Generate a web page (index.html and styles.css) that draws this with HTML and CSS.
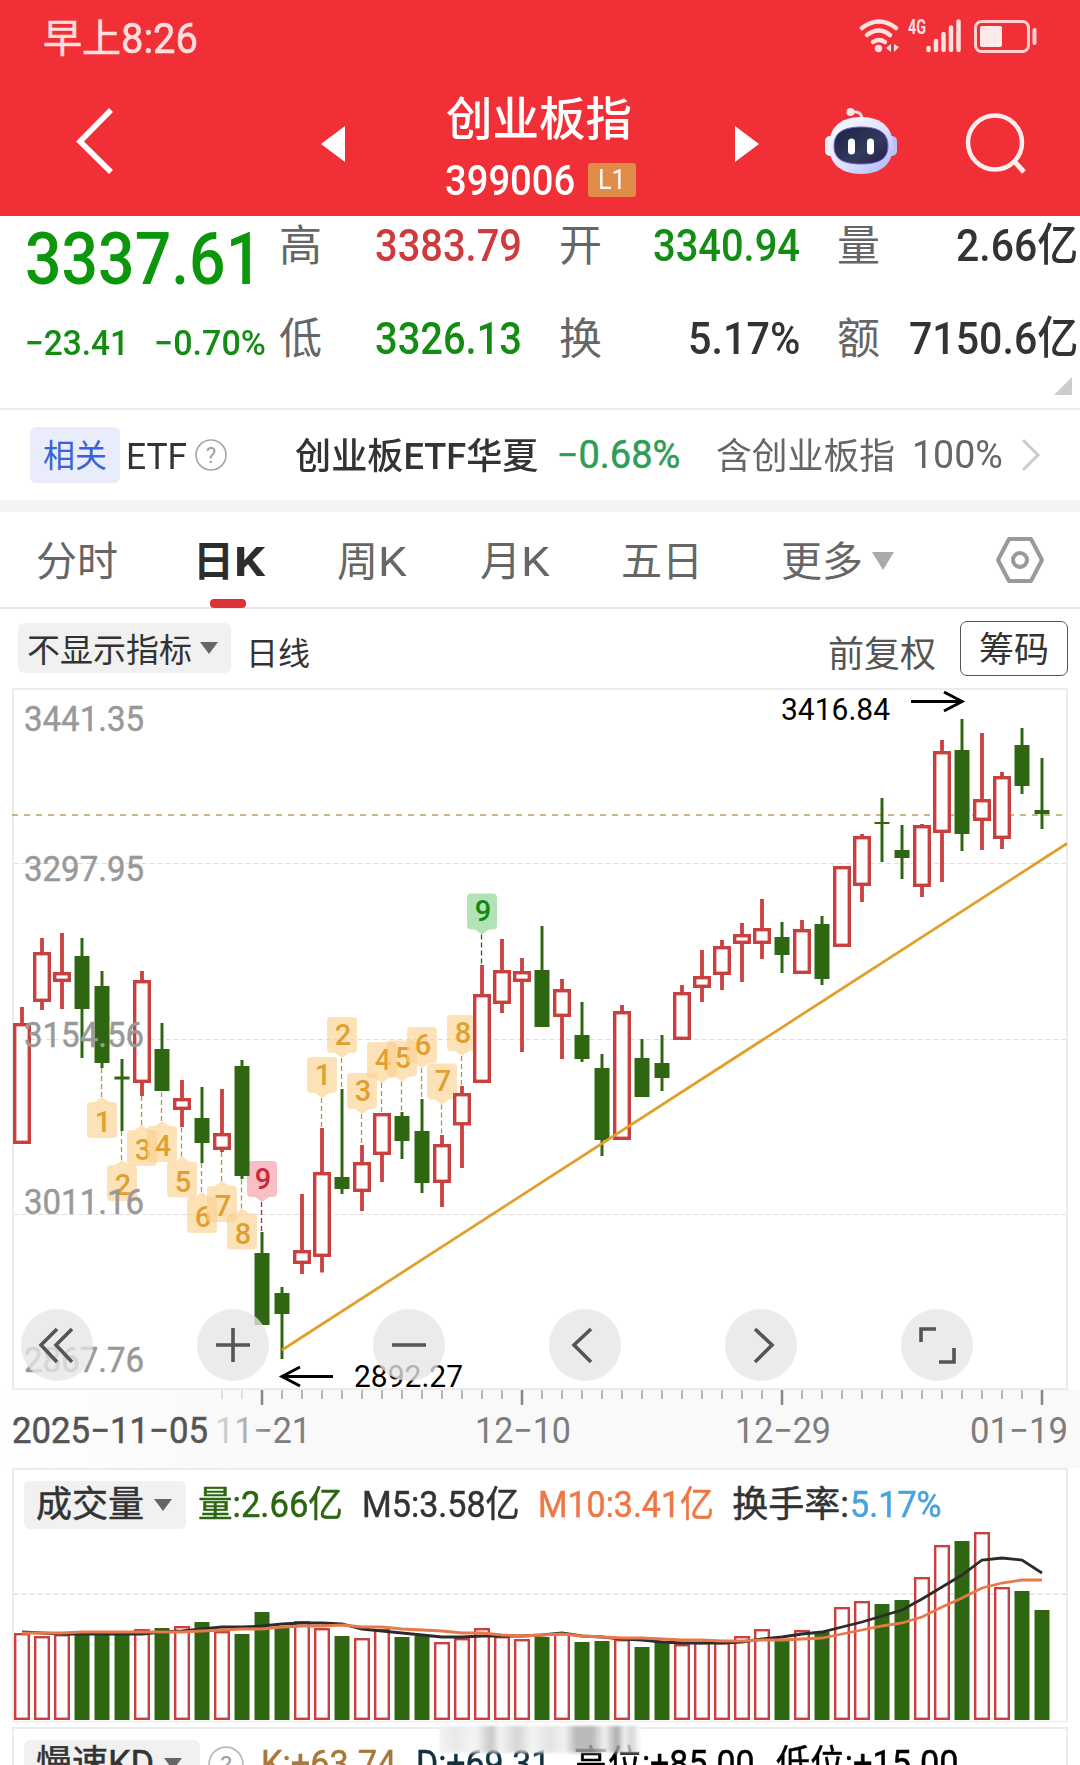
FILE: index.html
```html
<!DOCTYPE html>
<html lang="zh-CN">
<head>
    <link rel="icon" href="data:,">
    <meta charset="UTF-8">
    <meta name="viewport" content="width=device-width, initial-scale=1.0">
    <title>创业板指 399006</title>
    <link rel="stylesheet" href="styles.css">
</head>
<body>

    <!-- Red top area: status bar and title bar -->
    <header class="top">
        <div class="status">
            <div class="clock"><span data-w="78">早上</span><span class="clock-num" data-w="77">8:26</span></div>
            <svg class="status-icons" width="182" height="38" viewBox="858 17 182 38">
                <g fill="none" stroke="#ffe0e0" stroke-width="4.5" stroke-linecap="round">
                    <path d="M862 28 Q879 15 896 28"/>
                    <path d="M867 35 Q879 26 890 35"/>
                    <path d="M873 42 Q879 38 885 42"/>
                </g>
                <circle cx="878.500" cy="48.500" r="3.700" fill="#ffe0e0"/>
                <path d="M891 44v8l-5-4zM894 44v8l5-5z" fill="#ffe0e0"/>
                <text x="908" y="33.500" class="net" textLength="18" lengthAdjust="spacingAndGlyphs">4G</text>
                <g stroke="#ffe0e0" stroke-width="4.500" stroke-linecap="round">
                    <path d="M928.500 48v2M936 41v9M943.500 34v16M951 27.500v22.500M958.500 21.500v28.500"/>
                </g>
                <rect x="975.500" y="21.500" width="53" height="30" rx="6" fill="none" stroke="#ffd0d0" stroke-width="3"/>
                <rect x="980" y="26" width="22" height="21" rx="2" fill="#ffe9e9"/>
                <rect x="1032.500" y="28" width="4" height="17" rx="2" fill="#ffd0d0"/>
            </svg>
        </div>
        <div class="titlebar">
            <svg class="back" width="40" height="70" viewBox="0 0 40 70"><path d="M36 4 5 35.500 36 66" fill="none" stroke="#fff" stroke-width="5.500"/></svg>
            <svg class="prev" width="24" height="38" viewBox="0 0 24 38"><path d="M0 19 24 1v36z" fill="#fff"/></svg>
            <div class="name">
                <h1><span data-w="186">创业板指</span></h1>
                <div class="code"><span data-w="130">399006</span><i><span data-w="28">L1</span></i></div>
            </div>
            <svg class="next" width="24" height="38" viewBox="0 0 24 38"><path d="M24 19 0 1v36z" fill="#fff"/></svg>
            <svg class="robot" width="74" height="70" viewBox="824 106 74 70">
                <defs>
                    <linearGradient id="shell" x1="0" y1="0" x2="1" y2="1">
                        <stop offset="0" stop-color="#fff"/><stop offset=".55" stop-color="#dfe0fb"/><stop offset="1" stop-color="#a9b2ff"/>
                    </linearGradient>
                    <linearGradient id="visor" x1="0" y1="0" x2="1" y2="1">
                        <stop offset="0" stop-color="#19233f"/><stop offset=".6" stop-color="#323a5e"/><stop offset="1" stop-color="#222045"/>
                    </linearGradient>
                </defs>
                <path d="M851 112q11-2 11 8" fill="none" stroke="#ffd9e0" stroke-width="3"/>
                <circle cx="850.500" cy="112" r="4" fill="#ffe3e6"/>
                <rect x="825" y="136" width="10" height="20" rx="5" fill="#e8ecff"/>
                <rect x="887" y="136" width="10" height="20" rx="5" fill="#b9c2ff"/>
                <path d="M861 117c22 0 32 12 32 29s-11 28-32 28-32-11-32-28 10-29 32-29z" fill="url(#shell)"/>
                <path d="M861 127c18 0 27 6 27 19s-9 18-27 18-27-5-27-18 9-19 27-19z" fill="url(#visor)" stroke="#7a5ee0" stroke-width="1"/>
                <path d="M851.500 142v9M870.500 142v9" stroke="#fff" stroke-width="7" stroke-linecap="round"/>
            </svg>
            <svg class="search" width="64" height="64" viewBox="963 111 64 64">
                <circle cx="995" cy="142.500" r="27" fill="none" stroke="#ffeded" stroke-width="4.500"/>
                <path d="M1014 161l10 11" stroke="#ffeded" stroke-width="5"/>
            </svg>
        </div>
    </header>

    <!-- Quote summary -->
    <section class="quote">
        <div class="price-col">
            <div class="price"><span data-w="237">3337.61</span></div>
            <div class="change"><span data-w="104">−23.41</span><span data-w="112">−0.70%</span></div>
        </div>
        <div class="cells">
            <div class="cell"><label>高</label><b class="red" data-w="147">3383.79</b></div>
            <div class="cell"><label>开</label><b class="green" data-w="147">3340.94</b></div>
            <div class="cell"><label>量</label><b data-w="122">2.66亿</b></div>
            <div class="cell"><label>低</label><b class="green" data-w="147">3326.13</b></div>
            <div class="cell"><label>换</label><b data-w="112">5.17%</b></div>
            <div class="cell"><label>额</label><b data-w="169">7150.6亿</b></div>
        </div>
        <i class="corner"></i>
    </section>

    <!-- Related ETF -->
    <section class="etf">
        <span class="tag">相关</span>
        <span class="etf-word" data-w="61">ETF</span>
        <svg class="help" width="32" height="32" viewBox="0 0 32 32"><circle cx="16" cy="16" r="15" fill="none" stroke="#a5a5a5" stroke-width="1.600"/><text x="16" y="24" text-anchor="middle">?</text></svg>
        <span class="etf-name" data-w="243">创业板ETF华夏</span>
        <span class="etf-pct" data-w="124">−0.68%</span>
        <span class="etf-hold" data-w="179">含创业板指</span>
        <span class="etf-rate" data-w="91">100%</span>
        <svg class="more" width="20" height="34" viewBox="0 0 20 34"><path d="M2 2 17 17 2 32" fill="none" stroke="#ccc" stroke-width="3"/></svg>
    </section>

    <!-- Period tabs -->
    <nav class="tabs">
        <span>分时</span>
        <span class="active">日<em data-w="31">K</em></span>
        <span>周<em data-w="29">K</em></span>
        <span>月<em data-w="29">K</em></span>
        <span>五日</span>
        <span class="dropdown">更多<i></i></span>
        <svg width="50" height="48" viewBox="0 0 50 48"><path d="M14 3h22l11 21-11 21H14L3 24z" fill="none" stroke="#999" stroke-width="4" stroke-linejoin="round"/><circle cx="25" cy="24" r="7" fill="none" stroke="#999" stroke-width="4"/></svg>
    </nav>

    <div class="options">
        <span class="chip">不显示指标<i></i></span>
        <span class="line-type">日线</span>
        <span class="adjust">前复权</span>
        <span class="chips-btn">筹码</span>
    </div>

    <!-- Candlestick chart -->
    <div class="kline">
        <svg id="kline" width="1080" height="702" viewBox="0 688 1080 702"></svg>
        <div class="tools">
            <button><svg viewBox="0 0 72 72"><path d="M36 20 20 36l16 17M51 20 35 36l16 17"/></svg></button>
            <button><svg viewBox="0 0 72 72"><path d="M19 36h34M36 19v34"/></svg></button>
            <button><svg viewBox="0 0 72 72"><path d="M19 36h34"/></svg></button>
            <button><svg viewBox="0 0 72 72"><path d="M42 20 25 36l17 17"/></svg></button>
            <button><svg viewBox="0 0 72 72"><path d="M30 20 47 36 30 53"/></svg></button>
            <button><svg viewBox="0 0 72 72"><path d="M20 33V20h15M53 39v14H38"/></svg></button>
        </div>
    </div>
    <svg id="axis" class="axis" width="1080" height="78" viewBox="0 1390 1080 78"></svg>

    <!-- Volume -->
    <section class="panel volume">
        <div class="legend">
            <span class="chip">成交量<i></i></span>
            <span class="l1" data-w="145">量:2.66亿</span>
            <span class="l2" data-w="158">M5:3.58亿</span>
            <span class="l3" data-w="176">M10:3.41亿</span>
            <span class="l4" data-w="117">换手率:</span><span class="l5" data-w="92">5.17%</span>
        </div>
        <svg id="volume" width="1052" height="190" viewBox="14 1530 1052 190"></svg>
    </section>

    <!-- KD, cut off by the bottom edge -->
    <section class="panel kd">
        <div class="legend">
            <span class="chip">慢速KD<i></i></span>
            <svg class="help" width="36" height="36" viewBox="0 0 32 32"><circle cx="16" cy="16" r="15" fill="none" stroke="#bbb" stroke-width="1.600"/><text x="16" y="24" text-anchor="middle">?</text></svg>
            <span class="k1" data-w="135">K:+63.74</span>
            <span class="k2" data-w="134">D:+69.31</span>
            <span class="k3" data-w="181">高位:+85.00</span>
            <span class="k4" data-w="183">低位:+15.00</span>
        </div>
        <div class="smudge"></div>
    </section>

    <script src="chart.js"></script>
</body>
</html>
```
FILE: styles.css
```css
/* General page styling */
* {
    box-sizing: border-box;
}

body {
    margin: 0;
    width: 1080px;
    height: 1765px;
    overflow: hidden;
    background: #fff;
    color: #333;
    font-family: Roboto, "Noto Sans CJK SC", sans-serif;
}

svg {
    display: block;
    flex: none;
}

i,
em {
    font-style: normal;
}

[data-w] {
    display: inline-block;
    white-space: nowrap;
    transform-origin: 0 50%;
}

.red { color: #cf3a3d; }
.green { color: #138c13; }

/* Top area */
.top {
    height: 216px;
    background: #f12f37;
    color: #fff;
}

.status {
    display: flex;
    justify-content: space-between;
    align-items: center;
    height: 76px;
    padding: 0 40px 4px 43px;
    color: #ffdede;
    font-size: 39px;
    -webkit-text-stroke: 0.6px #ffdede;
}

.status svg {
    -webkit-text-stroke: 0;
}

.clock {
    display: flex;
    align-items: center;
    line-height: 50px;
    padding-top: 6px;
}

.clock-num {
    font-size: 42px;
}

.net {
    font-size: 20px;
    font-weight: 700;
    fill: #ffe0e0;
}

.titlebar {
    display: flex;
    align-items: flex-start;
    height: 140px;
    padding-left: 75px;
}

.back { margin-top: 30px; }
.prev { margin: 49px 0 0 206px; }
.next { margin: 49px 0 0 98px; }
.robot { margin: 30px 0 0 65px; }
.search { margin: 35px 0 0 65px; }

.name {
    width: 192px;
    margin-left: 100px;
}

.name h1 {
    margin: 15px 0 0 1px;
    font-size: 46px;
    line-height: 56px;
    font-weight: 500;
}

.code {
    display: flex;
    align-items: center;
    height: 42px;
    margin-top: 12px;
    font-size: 42px;
    font-weight: 500;
}

.code i {
    width: 48px;
    height: 34px;
    margin-left: 13px;
    padding-left: 10px;
    border-radius: 3px;
    background: #e08c48;
    font-size: 28px;
    line-height: 34px;
    font-weight: 400;
}

/* Quote summary */
.quote {
    position: relative;
    display: flex;
    height: 194px;
    padding-left: 25px;
    border-bottom: 2px solid #ededed;
}

.price-col {
    width: 254px;
    flex: none;
}

.price {
    height: 84px;
    font-size: 73px;
    line-height: 84px;
    font-weight: 500;
    color: #0c960c;
    padding-top: 1px;
}

.change {
    display: flex;
    gap: 25px;
    margin-top: 24px;
    font-size: 35px;
    line-height: 40px;
    font-weight: 500;
    color: #138c13;
}

.cells {
    display: grid;
    grid-template-columns: 243px 241px 241px;
    grid-auto-rows: 60px;
    row-gap: 33px;
    column-gap: 37px;
}

.cell {
    display: flex;
    justify-content: space-between;
    align-items: center;
}

.cell label {
    font-size: 43px;
    line-height: 60px;
    color: #666;
}

.cell b {
    font-size: 45px;
    line-height: 60px;
    font-weight: 500;
}

.corner {
    position: absolute;
    right: 8px;
    bottom: 13px;
    border-left: 18px solid transparent;
    border-bottom: 18px solid #ccc;
}

/* Related ETF */
.etf {
    display: flex;
    align-items: center;
    height: 102px;
    padding-left: 30px;
    font-size: 36px;
    line-height: 50px;
    border-bottom: 12px solid #f4f4f4;
}

.tag {
    width: 90px;
    height: 56px;
    border-radius: 6px;
    background: #e9edfb;
    color: #3b63d6;
    font-size: 32px;
    line-height: 58px;
    text-align: center;
}

.etf-word { margin: 4px 0 0 6px; }
.help { margin-left: 8px; }
.help text { font-size: 22px; fill: #a0a0a0; }
.etf-name { margin: 4px 0 0 68px; font-weight: 500; }
.etf-pct { margin-left: 18px; font-size: 38px; color: #2f9c5a; -webkit-text-stroke: 0.5px #2f9c5a; }
.etf-hold { margin: 4px 0 0 36px; color: #666; }
.etf-rate { margin-left: 17px; font-size: 38px; color: #666; }
.more { margin-left: 18px; }

/* Period tabs */
.tabs {
    display: flex;
    align-items: center;
    height: 97px;
    padding-left: 36px;
    border-bottom: 2px solid #e8e8e8;
    font-size: 41px;
    color: #666;
}

.tabs span {
    position: relative;
    top: 2px;
    width: 143px;
    line-height: 60px;
    white-space: nowrap;
}

.tabs .active {
    width: 143px;
    padding-left: 14px;
    color: #2d2d2d;
    font-weight: 700;
}

.tabs .active::after {
    content: "";
    position: absolute;
    left: 31px;
    bottom: -16px;
    width: 36px;
    height: 9px;
    border-radius: 4px;
    background: #df3237;
}

.tabs span:nth-child(3),
.tabs span:nth-child(4) {
    padding-left: 15px;
}

.tabs span:nth-child(5) {
    padding-left: 13px;
    width: 173px;
}

.tabs .dropdown {
    width: 214px;
    display: flex;
    align-items: center;
}

.tabs .dropdown i {
    margin: -2px 0 0 9px;
    border: 11px solid transparent;
    border-top: 18px solid #aaa;
    border-bottom: 0;
}

/* Chart options */
.options {
    display: flex;
    align-items: center;
    height: 79px;
    padding: 0 12px 1px 18px;
    font-size: 32px;
}

.chip {
    display: flex;
    align-items: center;
    height: 50px;
    border-radius: 6px;
    background: #f1f1f1;
}

.chip i {
    margin-left: 10px;
    border: 9px solid transparent;
    border-top: 12px solid #666;
    border-bottom: 0;
}

.options .chip {
    width: 213px;
    padding-left: 9px;
    font-size: 33px;
}

.options .chip i { margin-left: 8px; }

.line-type { margin: 5px 0 0 15px; }
.adjust { margin: 6px 24px 0 auto; font-size: 36px; color: #555; }

.chips-btn {
    width: 108px;
    height: 55px;
    border: 1.5px solid #555;
    border-radius: 7px;
    font-size: 35px;
    line-height: 58px;
    text-align: center;
}

/* Candlestick chart */
.kline {
    position: relative;
    height: 702px;
}

.tools {
    position: absolute;
    left: 21px;
    bottom: 9px;
    display: flex;
    gap: 104px;
}

.tools button {
    width: 72px;
    height: 72px;
    padding: 0;
    border: 0;
    border-radius: 50%;
    background: rgba(230, 230, 230, 0.78);
}

.tools path {
    fill: none;
    stroke: #555;
    stroke-width: 3.6;
}

.scale {
    font-size: 35px;
    fill: #999;
    stroke: #999;
    stroke-width: 0.5px;
}

.peak {
    font-size: 31px;
    fill: #000;
}

.mark {
    font-size: 29px;
    font-weight: 500;
    text-anchor: middle;
}

.axis {
    background: linear-gradient(90deg, #fff, #f9f9f9 24%, #f9f9f9);
}

.date {
    font-size: 36px;
    fill: #7d7d7d;
}

.date.first {
    fill: #555;
    stroke: #555;
    stroke-width: 0.5px;
}

/* Indicator panels */
.panel {
    width: 1056px;
    margin-left: 12px;
    border: 2px solid #ececec;
    font-size: 36px;
}

.volume {
    height: 254px;
    border-bottom-width: 1px;
}

.kd {
    position: relative;
    height: 80px;
    margin-top: 5px;
}

.legend {
    display: flex;
    align-items: center;
    height: 50px;
    margin: 10px 0 0 10px;
    line-height: 52px;
    -webkit-text-stroke: 0.5px;
}

.legend svg {
    -webkit-text-stroke: 0;
}

.legend .chip {
    width: 162px;
    padding-left: 12px;
    height: 48px;
    font-size: 36px;
}

.kd .legend .chip {
    width: 176px;
}

.l1 { margin-left: 12px; color: #2d6612; }
.l2 { margin-left: 19px; }
.l3 { margin-left: 18px; color: #ee7844; }
.l4 { margin-left: 19px; }
.l5 { margin-left: 1px; color: #48a3de; }
.kd .help { margin-left: 8px; }
.k1 { margin-left: 17px; color: #a8773a; }
.k2 { margin-left: 20px; color: #12303f; }
.k3 { margin-left: 24px; color: #000; }
.k4 { margin-left: 21px; color: #000; }

/* Smeared watermark over the panel edge */
.smudge {
    position: absolute;
    left: 425px;
    top: -3px;
    width: 202px;
    height: 27px;
    background: linear-gradient(90deg, #f2f2f2, #e4e4e4 8%, #f4f4f4 18%, #bbb 26%, #f0f0f0 30%, #ccc 39%, #f2f2f2 46%, #ddd 55%, #f0f0f0 62%, #aaa 68%, #aaa 76%, #f0f0f0 82%, #999 88%, #eee 92%, #ccc 95%, #fff);
    opacity: 0.8;
    filter: blur(1.5px);
}
```
FILE: chart.js
```js
var RED = '#c9403f';
var GREEN = '#2f6612';
var FIRST_X = 22;
var STEP = 20;

// direction, high, body top, body bottom, low
var candles = [
    ['r', 1007, 1023, 1144, 1144], ['r', 938, 952, 1002, 1010], ['r', 933, 972, 982, 1009],
    ['g', 938, 956, 1009, 1058], ['g', 971, 986, 1063, 1068], ['g', 1059, 1076.5, 1079.5, 1131],
    ['r', 971, 980, 1083, 1096], ['g', 1023, 1049, 1091, 1091], ['r', 1080, 1098, 1110, 1127],
    ['g', 1087, 1118, 1143, 1163], ['r', 1089, 1133, 1150, 1152], ['g', 1060, 1066, 1176, 1179],
    ['g', 1232, 1253, 1325, 1325], ['g', 1287, 1293, 1314, 1359], ['r', 1194, 1250, 1264, 1274],
    ['r', 1128, 1172, 1257, 1272.5], ['g', 1089, 1177, 1189, 1194], ['r', 1145, 1162, 1192, 1211],
    ['r', 1113, 1113, 1155, 1182], ['g', 1112, 1116, 1141, 1159], ['g', 1099, 1131, 1183, 1193],
    ['r', 1135, 1144, 1183, 1207], ['r', 1086, 1093, 1125.5, 1168], ['r', 965, 994, 1083, 1083],
    ['r', 939, 970, 1004, 1013], ['r', 958, 971, 982, 1052], ['g', 926, 970, 1027, 1027],
    ['r', 979, 989, 1017, 1059], ['g', 1002, 1035, 1059, 1062], ['g', 1054, 1068, 1140, 1156],
    ['r', 1005, 1011, 1140, 1140], ['g', 1039, 1058, 1097, 1097], ['g', 1035, 1063, 1078, 1091],
    ['r', 985, 992, 1040, 1040], ['r', 950, 976, 988, 1002], ['r', 940, 946, 975, 990],
    ['r', 923, 934, 944, 982], ['r', 899, 928, 944, 959], ['g', 922, 937, 955, 973],
    ['r', 920, 929, 974, 974], ['g', 916, 924, 979, 985], ['r', 866, 866, 947, 947],
    ['r', 834, 836, 886, 902], ['g', 798, 822, 824, 862], ['g', 825, 850, 858, 879],
    ['r', 824, 825, 887, 897], ['r', 740, 751, 833, 882], ['g', 719, 750, 834, 851],
    ['r', 733, 799, 821, 850], ['r', 772, 776, 839, 849], ['g', 728, 745, 786, 794],
    ['g', 758, 810, 814, 829]
];

// candle index, label, pointer tip, placed above (1) or below (0) the candle
var marks = [
    [4, 1, 1097, 0], [5, 2, 1160, 0], [6, 3, 1125, 0], [7, 4, 1121, 0],
    [8, 5, 1156.5, 0], [9, 6, 1192, 0], [10, 7, 1181, 0], [11, 8, 1208.5, 0], [12, 9, 1202, 1],
    [15, 1, 1098, 1], [16, 2, 1058, 1], [17, 3, 1114, 1], [18, 4, 1083, 1],
    [19, 5, 1081.5, 1], [20, 6, 1068, 1], [21, 7, 1104.5, 1], [22, 8, 1056, 1], [23, 9, 934.5, 1]
];

var volumes = [87, 84, 86, 85, 85, 86, 91, 92, 94, 98, 89, 86, 108, 92, 99, 92, 84, 82, 91, 83, 84, 78, 82, 92, 84, 81,
    83, 87, 78, 79, 81, 73, 78, 76, 78, 78, 84, 91, 80, 90, 88, 113, 119, 116, 120, 143, 175, 179, 188, 133, 129, 110];
var ma5 = [88, 87, 86, 86, 86, 86, 86, 88, 89, 91, 93, 93, 94, 96, 97, 97, 96, 91, 89, 87, 85, 83, 83, 84, 84, 84,
    85, 87, 84, 83, 81, 80, 78, 77, 77, 77, 78, 81, 83, 86, 88, 93, 98, 104, 110, 121, 133, 145, 160, 162, 160, 147];
var ma10 = [87, 87, 87, 88, 88, 88, 88, 88, 88, 89, 90, 91, 91, 93, 94, 94, 95, 93, 93, 91, 90, 89, 87, 87, 85, 84,
    85, 86, 84, 83, 82, 82, 81, 80, 80, 79, 79, 80, 80, 81, 82, 86, 90, 94, 97, 103, 113, 122, 132, 137, 140, 140];

function line(x1, y1, x2, y2, color, width, dash) {
    return `<line x1="${x1}" y1="${y1}" x2="${x2}" y2="${y2}" stroke="${color}" stroke-width="${width}"` +
        (dash ? ` stroke-dasharray="${dash}"` : '') + '/>';
}

function text(x, y, str, cls, width, fill) {
    return `<text x="${x}" y="${y}" class="${cls}"` + (fill ? ` style="fill:${fill}"` : '') +
        (width ? ` textLength="${width}" lengthAdjust="spacingAndGlyphs"` : '') + `>${str}</text>`;
}

function box(x, top, bottom, dir, w, stroke) {
    if (dir === 'g') {
        return `<rect x="${x - 7.5}" y="${top}" width="15" height="${bottom - top}" fill="${GREEN}"/>`;
    }
    return `<rect x="${x - (w - stroke) / 2}" y="${top + stroke / 2}" width="${w - stroke}" height="${bottom - top - stroke}" fill="#fff" stroke="${RED}" stroke-width="${stroke}"/>`;
}

function drawMark(m) {
    var x = FIRST_X + m[0] * STEP, tip = m[2], s = m[3] ? -1 : 1;
    var bg = '#fbd08c', fg = '#e0a030', dash = '#b09a50';
    if (m[1] === 9) {
        bg = m[0] === 12 ? '#f39aa2' : '#86d08a';
        fg = m[0] === 12 ? '#c8283a' : '#0f8a14';
        dash = m[0] === 12 ? '#9a3038' : GREEN;
    }
    var c = candles[m[0]];
    var sweep = m[3] ? 0 : 1;
    var out = line(x - 0.5, tip, x - 0.5, m[3] ? c[1] : c[4], dash, 1.3, '5 3');
    out += `<path d="M${x} ${tip}l7 ${5 * s}h4a4 4 0 0 ${sweep} 4 ${4 * s}v${28 * s}a4 4 0 0 ${sweep} -4 ${4 * s}h-22a4 4 0 0 ${sweep} -4 ${-4 * s}v${-28 * s}a4 4 0 0 ${sweep} 4 ${-4 * s}h4z" fill="${bg}" fill-opacity=".62"/>`;
    return out + text(x + 1, (m[3] ? tip - 13.5 : tip + 35), m[1], 'mark', 0, fg);
}

function drawKline() {
    var out = '<rect x="13" y="689" width="1054" height="700" fill="none" stroke="#ececec" stroke-width="2"/>';
    [863.5, 1039.5, 1214.5].forEach(function(y) {
        out += line(14, y, 1066, y, '#ddd', 1.2, '5 3');
    });
    out += line(12, 815, 1064, 815, '#bb9a5a', 1.6, '6 6');

    marks.forEach(function(m) { out += drawMark(m); });

    candles.forEach(function(c, i) {
        var x = FIRST_X + i * STEP;
        var color = c[0] === 'r' ? RED : GREEN;
        if (c[1] < c[4]) {
            out += line(x, c[1], x, c[4], color, c[0] === 'r' ? 3.8 : 3);
        }
        out += box(x, c[2], c[3], c[0], 18, 3.4);
    });

    // Trend line
    out += line(282, 1350, 1067, 843.5, '#e0a02c', 2.8);

    [['3441.35', 731], ['3297.95', 881], ['3154.56', 1047], ['3011.16', 1214], ['2867.76', 1372]].forEach(function(s) {
        out += text(24, s[1], s[0], 'scale', 120);
    });

    // High and low pointers
    out += text(781, 720, '3416.84', 'peak', 109);
    out += '<path d="M911 701.500h50M944 692l18 9.500-18 9.500" fill="none" stroke="#000" stroke-width="3"/>';
    out += text(354, 1387, '2892.27', 'peak', 109);
    out += '<path d="M333 1376.500h-50M300 1367l-18 9.500 18 9.500" fill="none" stroke="#000" stroke-width="3"/>';
    document.getElementById('kline').innerHTML = out;
}

function drawAxis() {
    var out = '<defs><linearGradient id="fade"><stop offset="0" stop-color="#ddd"/><stop offset=".35" stop-color="#aaa"/><stop offset=".6" stop-color="#7d7d7d"/></linearGradient></defs>';
    for (var i = 10; i < candles.length; i++) {
        var x = FIRST_X + i * STEP;
        var major = (i + 1) % 13 === 0;
        out += line(x, 1390, x, major ? 1405 : 1399, i < 12 ? '#ccc' : '#8a8a8a', major ? 2.6 : 1.2);
    }
    out += text(12, 1443, '2025−11−05', 'date first', 196);
    out += text(215, 1443, '11−21', 'date', 96, 'url(#fade)');
    out += text(475, 1443, '12−10', 'date', 96);
    out += text(735, 1443, '12−29', 'date', 96);
    out += text(970, 1443, '01−19', 'date', 98);
    document.getElementById('axis').innerHTML = out;
}

function drawVolume() {
    var base = 1720;
    var out = line(13, 1594, 1066, 1594, '#e2e2e2', 1.4, '5 3');
    volumes.forEach(function(v, i) {
        out += box(FIRST_X + i * STEP, base - v, base, candles[i][0], 16, 2.4);
    });
    [[ma5, '#2b2b2b'], [ma10, '#e8794a']].forEach(function(s) {
        var pts = s[0].map(function(v, i) { return (FIRST_X + i * STEP) + ',' + (base - v); }).join(' ');
        out += `<polyline points="${pts}" fill="none" stroke="${s[1]}" stroke-width="2.8"/>`;
    });
    document.getElementById('volume').innerHTML = out;
}

function fitLabels() {
    document.querySelectorAll('[data-w]').forEach(function(el) {
        var natural = el.offsetWidth;
        var wanted = Number(el.dataset.w);
        el.style.transform = `scaleX(${wanted / natural})`;
        el.style.marginRight = (wanted - natural) + 'px';
    });
}

drawKline();
drawAxis();
drawVolume();
fitLabels();
```
